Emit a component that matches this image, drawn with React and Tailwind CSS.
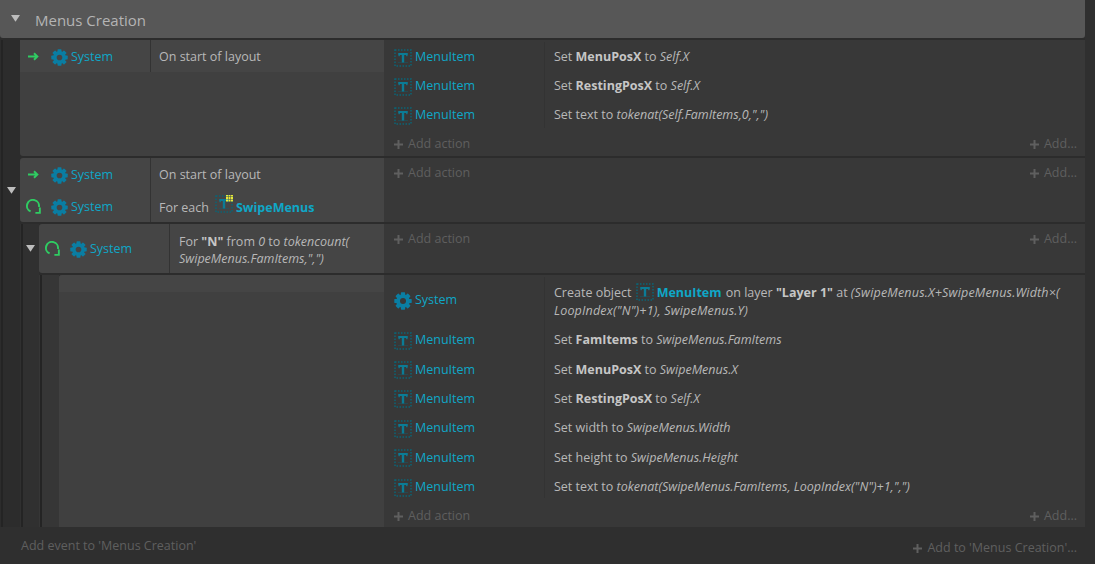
import React from "react";

const Gear = ({ big }) => (
  <svg width={big ? 18 : 17} height={big ? 18 : 17} viewBox="0 0 18 18" className="shrink-0">
    <circle cx="9" cy="9" r="4.9" fill="none" stroke="#0a7ea3" strokeWidth="3.8" />
    {[0, 45, 90, 135, 180, 225, 270, 315].map((a) => (
      <rect key={a} x="6.9" y="0.3" width="4.2" height="3.6" rx="0.7" fill="#0a7ea3" transform={`rotate(${a} 9 9)`} />
    ))}
  </svg>
);

const TIcon = ({ yellow }) => (
  <svg width="18" height="18" viewBox="0 0 18 18" className="shrink-0">
    <rect x="1" y="1" width="16" height="16" fill="none" stroke="#0a6475" strokeWidth="1.5" strokeDasharray="1.5 1.5" />
    <rect x="4" y="13" width="10" height="1" fill="#0b6476" opacity="0.4" />
    <rect x="4.5" y="4" width="9" height="2" fill="#0b7c96" />
    <rect x="4.5" y="4" width="1.3" height="3.2" fill="#0b7c96" />
    <rect x="12.2" y="4" width="1.3" height="3.2" fill="#0b7c96" />
    <rect x="7.8" y="4" width="2.4" height="9.5" fill="#0b7c96" />
    {yellow &&
      [12, 14.5, 17].flatMap((x) =>
        [0, 2.5, 5].map((y) => <rect key={`${x}-${y}`} x={x - 1} y={y - 0.5} width="2" height="2" fill="#e8e83a" />)
      )}
  </svg>
);

const Arrow = () => (
  <svg width="11" height="9" viewBox="0 0 11 9" className="shrink-0 ml-[2px]">
    <path d="M0 4.5H9M6 1.2L9.4 4.5L6 7.8" stroke="#2fcc62" strokeWidth="1.9" fill="none" />
  </svg>
);

const Loop = () => (
  <svg width="15" height="15" viewBox="0 0 15 15" className="shrink-0">
    <path d="M4.6 12.4A6 6 0 1 1 12.9 8" stroke="#2fcc62" strokeWidth="2" fill="none" />
    <path d="M12.9 8.6H14.8V14.8H9.4V12.9H12.9Z" fill="#2fcc62" />
  </svg>
);

const Tri = () => (
  <svg width="9" height="7" viewBox="0 0 9 7"><path d="M0 0H9L4.5 6.8Z" fill="#bdbdbd" /></svg>
);

const B = ({ children }) => <b className="font-bold text-[#c6c6c6]">{children}</b>;
const I = ({ children, className = "" }) => <i className={`italic ${className}`}>{children}</i>;

const Cond = ({ lead, label, children, className, shift = "" }) => (
  <div className={`flex items-center ${className}`}>
    <div className="w-[31px] pl-[6px] flex justify-start shrink-0">{lead}</div>
    <div className={`w-[99px] flex items-center gap-[3px] text-[#0fa7c7] shrink-0 relative top-[1px] ${shift}`}>
      <Gear />
      <span>{label}</span>
    </div>
    <div className="flex-1 pl-[9px] text-[#b8b8b8] leading-[17px]">{children}</div>
  </div>
);

const Action = ({ obj, h, children }) => (
  <div className="flex items-center" style={{ height: h }}>
    <div className="w-[160px] pl-[10px] flex items-center gap-[3px] text-[#0fa7c7] shrink-0">
      {obj === "System" ? <Gear big /> : <TIcon />}
      <span>{obj}</span>
    </div>
    <div className="flex-1 pl-[10px] text-[#b8b8b8] leading-[17px] relative bottom-[1px]">{children}</div>
  </div>
);

const Plus = () => (
  <svg width="9" height="9" viewBox="0 0 9 9"><path d="M4.5 0V9M0 4.5H9" stroke="#5f5f5f" strokeWidth="2" /></svg>
);

const AddRow = ({ h = "h-[29px]" }) => (
  <div className={`flex items-center justify-between pl-[10px] pr-[8px] text-[#5f5f5f] ${h}`}>
    <span className="flex items-center gap-[5px]"><Plus />Add action</span>
    <span className="flex items-center gap-[5px]"><Plus />Add...</span>
  </div>
);

const Actions = ({ children, className = "" }) => (
  <div className={`flex-1 bg-[#383838] relative ${className}`}>{children}</div>
);

const Divider = ({ className }) => <div className={`absolute w-px bg-[#333333] ${className}`} />;

export default function App() {
  return (
    <div
      className="w-[1095px] h-[564px] bg-[#2f2f2f] overflow-hidden flex flex-col text-[12.5px]"
      style={{ fontFamily: '"Open Sans", sans-serif' }}
    >
      <div className="w-[1085px] h-[38px] shrink-0 bg-[#575757] rounded-b-[3px] flex items-center pl-[11px] gap-[15px] text-[#b4b4b4] text-[15px]">
        <span className="relative bottom-[1px]"><Tri /></span>
        <span className="relative top-[1px]">Menus Creation</span>
      </div>

      <div className="w-[1085px] h-[489px] shrink-0 overflow-hidden pt-[2px] flex bg-[#2c2c2c]">
        <div className="w-[20px] shrink-0 pl-[1px] relative">
          <div className="w-[2px] h-full bg-[#242424]" />
          <div className="absolute left-[7px] top-[147px]"><Tri /></div>
        </div>

        <div className="flex-1 flex flex-col gap-[2px]">
          <div className="flex h-[116px] shrink-0">
            <div className="w-[364px] bg-[#404040] rounded-l-[3px] shrink-0">
              <Cond lead={<Arrow />} label="System" className="h-[32px] bg-[#454545] relative">
                On start of layout
                <Divider className="left-[130px] top-0 h-full" />
              </Cond>
            </div>
            <Actions className="pt-[3px]">
              <Divider className="left-[160px] top-[2px] h-[86px]" />
              <Action obj="MenuItem" h={29}>Set <B>MenuPosX</B> to <I>Self.X</I></Action>
              <Action obj="MenuItem" h={29}>Set <B>RestingPosX</B> to <I>Self.X</I></Action>
              <Action obj="MenuItem" h={29}>Set text to <I>tokenat(Self.FamItems,0,",")</I></Action>
              <AddRow />
            </Actions>
          </div>

          <div className="flex h-[64px] shrink-0">
            <div className="w-[364px] bg-[#454545] rounded-l-[3px] shrink-0 relative">
              <Divider className="left-[130px] top-0 h-full" />
              <Cond lead={<Arrow />} label="System" className="h-[32px]">On start of layout</Cond>
              <Cond lead={<Loop />} label="System" className="h-[32px]">
                <span className="flex items-center gap-[6px] relative top-[1px]">
                  For each
                  <span className="flex items-center gap-[3px] font-bold text-[#0fa7c7]"><span className="relative bottom-[3px]"><TIcon yellow /></span>SwipeMenus</span>
                </span>
              </Cond>
            </div>
            <Actions className="pt-[1px]"><AddRow /></Actions>
          </div>

          <div className="flex-1 flex min-h-0">
            <div className="w-[19px] shrink-0 pl-[1px] relative bg-[#303030]">
              <div className="w-[2px] h-full bg-[#242424]" />
              <div className="absolute left-[6px] top-[21px]"><Tri /></div>
            </div>
            <div className="flex-1 flex flex-col gap-[2px] min-w-0">
              <div className="flex h-[49px] shrink-0">
                <div className="w-[345px] bg-[#454545] rounded-l-[3px] shrink-0 relative">
                  <Divider className="left-[130px] top-0 h-full" />
                  <Cond lead={<Loop />} label="System" className="h-full">
                    <span className="relative top-[1px] left-[1px] block">
                      For <B>"N"</B> from <I>0</I> to <I>tokencount(</I><br /><I>SwipeMenus.FamItems,",")</I>
                    </span>
                  </Cond>
                </div>
                <Actions className="pt-[1px]"><AddRow /></Actions>
              </div>

              <div className="flex-1 flex min-h-0">
                <div className="w-[20px] shrink-0 pl-[1px] bg-[#363636]">
                  <div className="w-[2px] h-full bg-[#242424]" />
                </div>
                <div className="w-[325px] bg-[#404040] rounded-tl-[3px] shrink-0">
                  <div className="h-[17px] bg-[#454545] rounded-tl-[3px]" />
                </div>
                <Actions className="pt-[8px]">
                  <Divider className="left-[160px] top-[2px] h-[221px]" />
                  <Action obj="System" h={35}>
                    <span className="relative top-[2px]">
                      Create object <span className="inline-flex items-center align-middle font-bold text-[#0fa7c7] gap-[3px] relative bottom-[1px] mx-[1px]"><TIcon />MenuItem</span> on layer <B>"Layer 1"</B> at <I className="tracking-[0.18px]">(SwipeMenus.X+SwipeMenus.Width×(</I><br /><I className="tracking-[0.18px]">LoopIndex("N")+1), SwipeMenus.Y)</I>
                    </span>
                  </Action>
                  <div className="h-[8px]" />
                  <Action obj="MenuItem" h={29.4}>Set <B>FamItems</B> to <I>SwipeMenus.FamItems</I></Action>
                  <Action obj="MenuItem" h={29.4}>Set <B>MenuPosX</B> to <I>SwipeMenus.X</I></Action>
                  <Action obj="MenuItem" h={29.4}>Set <B>RestingPosX</B> to <I>Self.X</I></Action>
                  <Action obj="MenuItem" h={29.4}>Set width to <I>SwipeMenus.Width</I></Action>
                  <Action obj="MenuItem" h={29.4}>Set height to <I>SwipeMenus.Height</I></Action>
                  <Action obj="MenuItem" h={29.4}>Set text to <I>tokenat(SwipeMenus.FamItems, LoopIndex("N")+1,",")</I></Action>
                  <AddRow />
                </Actions>
              </div>
            </div>
          </div>
        </div>
      </div>

      <div className="flex-1 w-[1085px] flex items-center justify-between pl-[21px] pr-[8px] text-[#5f5f5f]">
        <span className="relative top-[1px]">Add event to 'Menus Creation'</span>
        <span className="flex items-center gap-[5px] relative top-[3px]"><Plus />Add to 'Menus Creation'...</span>
      </div>
    </div>
  );
}
